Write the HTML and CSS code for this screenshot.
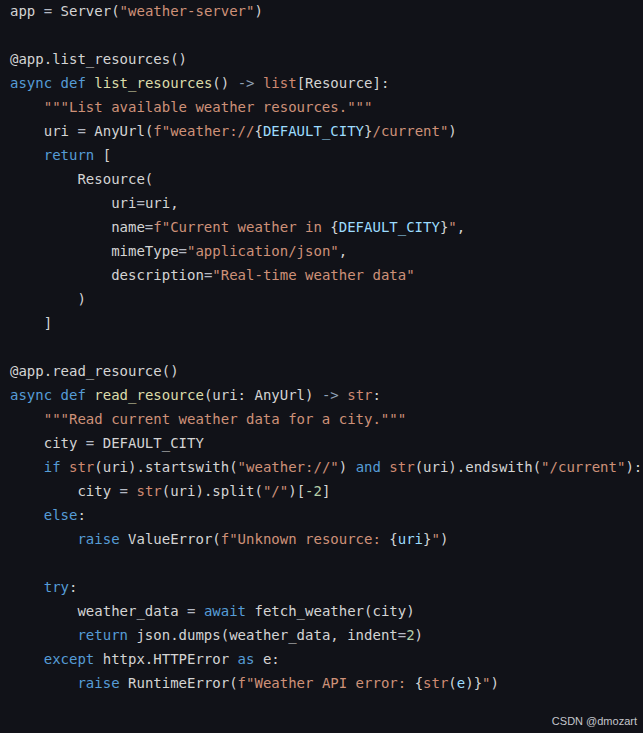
FILE: index.html
```html
<!DOCTYPE html>
<html>
<head>
<meta charset="utf-8">
<link rel="stylesheet" href="styles.css">
</head>
<body>
<main class="editor">
<pre class="code">app <span class="op">=</span> Server(<span class="s">"weather-server"</span>)

@app.list_resources()
<span class="k">async</span> <span class="k">def</span> <span class="fn">list_resources</span>() <span class="ar">-&gt;</span> <span class="b">list</span>[Resource]:
    <span class="s">"""List available weather resources."""</span>
    uri <span class="op">=</span> AnyUrl(<span class="s">f"weather://</span>{<span class="v">DEFAULT_CITY</span>}<span class="s">/current"</span>)
    <span class="k">return</span> [
        Resource(
            uri<span class="op">=</span>uri,
            name<span class="op">=</span><span class="s">f"Current weather in </span>{<span class="v">DEFAULT_CITY</span>}<span class="s">"</span>,
            mimeType<span class="op">=</span><span class="s">"application/json"</span>,
            description<span class="op">=</span><span class="s">"Real-time weather data"</span>
        )
    ]

@app.read_resource()
<span class="k">async</span> <span class="k">def</span> <span class="fn">read_resource</span>(uri: AnyUrl) <span class="ar">-&gt;</span> <span class="b">str</span>:
    <span class="s">"""Read current weather data for a city."""</span>
    city <span class="op">=</span> DEFAULT_CITY
    <span class="k">if</span> <span class="b">str</span>(uri).startswith(<span class="s">"weather://"</span>) <span class="k">and</span> <span class="b">str</span>(uri).endswith(<span class="s">"/current"</span>):
        city <span class="op">=</span> <span class="b">str</span>(uri).split(<span class="s">"/"</span>)[<span class="n">-2</span>]
    <span class="k">else</span>:
        <span class="k">raise</span> ValueError(<span class="s">f"Unknown resource: </span>{<span class="v">uri</span>}<span class="s">"</span>)

    <span class="k">try</span>:
        weather_data <span class="op">=</span> <span class="k">await</span> fetch_weather(city)
        <span class="k">return</span> json.dumps(weather_data, indent<span class="op">=</span><span class="n">2</span>)
    <span class="k">except</span> httpx.HTTPError <span class="k">as</span> e:
        <span class="k">raise</span> RuntimeError(<span class="s">f"Weather API error: </span>{<span class="b">str</span>(<span class="v">e</span>)}<span class="s">"</span>)
</pre>
<div class="watermark">CSDN @dmozart</div>
</main>
</body>
</html>
```
FILE: styles.css
```css
html, body {
  margin: 0;
  padding: 0;
  background: #111218;
}
.editor {
  position: relative;
  width: 643px;
  height: 733px;
  overflow: hidden;
  background: #111218;
}
.code {
  margin: -1px 0 0 0;
  padding: 0 0 0 10px;
  font-family: "DejaVu Sans Mono", "Liberation Mono", monospace;
  font-size: 14px;
  line-height: 24px;
  color: #d4d4d4;
  white-space: pre;
}
.k { color: #569cd6; }
.fn { color: #dcdcaa; }
.s { color: #ce9178; }
.b { color: #d08a72; }
.v { color: #9cdcfe; }
.n { color: #b5cea8; }
.op { color: #b4b9c4; }
.ar { color: #8fa0b6; }
.watermark {
  position: absolute;
  right: 6px;
  bottom: 5px;
  font-family: "Liberation Sans", Arial, sans-serif;
  font-size: 11px;
  line-height: 14px;
  color: #c4c6cc;
}
```
